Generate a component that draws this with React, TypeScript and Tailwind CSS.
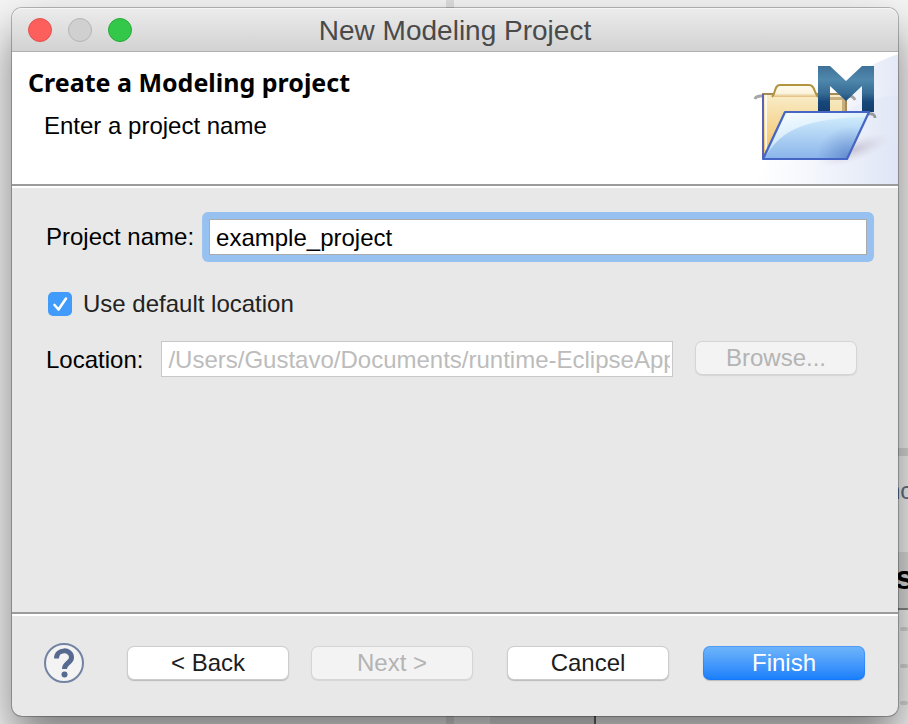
import type { ButtonHTMLAttributes } from "react";

function DialogButton({
  primary = false,
  ...props
}: ButtonHTMLAttributes<HTMLButtonElement> & { primary?: boolean }) {
  const look = primary
    ? "bg-linear-to-b from-[#6fb5fa] to-[#157efb] text-white shadow-[inset_0_0_0_1px_rgba(20,110,250,0.35),0_1px_1px_rgba(0,0,0,0.2)]"
    : "bg-white text-[#1c1c1c] shadow-[inset_0_0_0_1px_rgba(0,0,0,0.2),0_1px_1px_rgba(0,0,0,0.2)] disabled:bg-[#f3f3f3] disabled:text-[#b4b4b4] disabled:shadow-[inset_0_0_0_1px_rgba(0,0,0,0.12),0_1px_1px_rgba(0,0,0,0.08)]";
  return (
    <button
      type="button"
      className={`h-[34px] w-[162px] shrink-0 rounded-[7px] text-2xl leading-[34px] ${look}`}
      {...props}
    />
  );
}

function Separator() {
  return <div className="h-1 shrink-0 border-t-2 border-[#9b9b9b] bg-white" />;
}

function FolderIcon() {
  return (
    <svg viewBox="0 0 146 132" className="h-[132px] w-[146px]" aria-hidden="true">
      <defs>
        <linearGradient id="sky" gradientUnits="userSpaceOnUse" x1="0" y1="0" x2="146" y2="0">
          <stop offset="0" stopColor="#fff" />
          <stop offset="0.3" stopColor="#f7f9fd" />
          <stop offset="1" stopColor="#dfe5f6" />
        </linearGradient>
        <linearGradient id="haze" gradientUnits="userSpaceOnUse" x1="60" y1="0" x2="146" y2="0">
          <stop offset="0" stopColor="#fff" />
          <stop offset="1" stopColor="#e4e9f7" />
        </linearGradient>
        <linearGradient id="manila" x1="0" y1="0" x2="0" y2="1">
          <stop offset="0" stopColor="#f8edc9" />
          <stop offset="1" stopColor="#f3bd5c" />
        </linearGradient>
        <linearGradient id="tab" x1="0" y1="0" x2="0" y2="1">
          <stop offset="0" stopColor="#fffdf0" />
          <stop offset="0.7" stopColor="#fbf3dc" />
          <stop offset="1" stopColor="#e3bd7b" />
        </linearGradient>
        <linearGradient id="front" x1="0" y1="0" x2="0" y2="1">
          <stop offset="0" stopColor="#d6f1fe" />
          <stop offset="1" stopColor="#8ab4ea" />
        </linearGradient>
        <linearGradient id="shine" x1="0" y1="0" x2="0.6" y2="1">
          <stop offset="0" stopColor="#fafeff" />
          <stop offset="1" stopColor="#c8e4fa" stopOpacity="0.7" />
        </linearGradient>
        <radialGradient id="corner" gradientUnits="userSpaceOnUse" cx="98" cy="108" r="34">
          <stop offset="0" stopColor="#4a72bd" stopOpacity="0.7" />
          <stop offset="1" stopColor="#5b86cc" stopOpacity="0" />
        </radialGradient>
        <linearGradient id="mark" x1="0" y1="0" x2="0" y2="1">
          <stop offset="0" stopColor="#3f7299" />
          <stop offset="0.3" stopColor="#5087ad" />
          <stop offset="0.6" stopColor="#356b94" />
          <stop offset="0.78" stopColor="#17477a" />
          <stop offset="1" stopColor="#123e6e" />
        </linearGradient>
        <radialGradient id="cast">
          <stop offset="0" stopColor="#a89cb4" stopOpacity="0.5" />
          <stop offset="1" stopColor="#c4bccb" stopOpacity="0" />
        </radialGradient>
      </defs>
      <path d="M0 132C50 76 88 21 146 2V132Z" fill="url(#haze)" />
      <path d="M20 132C60 76 95 48 146 43V132Z" fill="url(#sky)" opacity="0.7" />
      <path d="M0 132L30 90H146V132Z" fill="url(#sky)" opacity="0.7" />
      <ellipse cx="102" cy="98" rx="38" ry="11" fill="url(#cast)" transform="rotate(-20 102 98)" />
      <path d="M3 47Q4 44 9 44H93Q101 43 103 48M25 65Q26 62 34 62" fill="none" stroke="#777" strokeOpacity="0.65" strokeWidth="3" />
      <path d="M11 42H90Q94 42 94 47V70L14 106H11Z" fill="url(#manila)" stroke="#a78a57" strokeWidth="2" />
      <path d="M66 45H93V60H90V48H66Z" fill="#a58a5a" opacity="0.6" />
      <path d="M11 42V107" stroke="#5c62b4" strokeWidth="2" />
      <path d="M14 43V98" stroke="#fff" strokeOpacity="0.8" strokeWidth="2" />
      <path d="M20 45C24 41 22 33 28 33H57C63 33 62 41 66 45Z" fill="url(#tab)" />
      <path d="M20 45C24 41 22 33 28 33H57C63 33 62 41 66 45" fill="none" stroke="#b4943f" strokeWidth="2" />
      <path d="M66 14H78L94 29L110 14H122V60H110V34L94 49L78 34V60H66Z" fill="url(#mark)" />
      <path d="M116 62Q123 61 123 66" fill="none" stroke="#777" strokeOpacity="0.7" strokeWidth="3" />
      <path d="M33 60H117L95 107H11Z" fill="url(#front)" />
      <path d="M34 61H115L113 65C71 67 33 70 14 104Z" fill="url(#shine)" />
      <path d="M33 60H117L95 107H11Z" fill="url(#corner)" />
      <path d="M33 60H117L95 107H11Z" fill="none" stroke="#4566c4" strokeWidth="2.2" strokeLinejoin="round" />
    </svg>
  );
}

function HelpIcon() {
  return (
    <svg viewBox="0 0 40 40" className="size-10" aria-hidden="true">
      <circle cx="20" cy="20" r="19" fill="#f3f3f3" stroke="#7383a3" strokeWidth="2" />
      <path d="M12.5 15.5C12.5 5.5 27.5 5.5 27.5 14.5C27.5 20 20.5 19.5 20.5 26" fill="none" stroke="#566a8f" strokeWidth="5" />
      <circle cx="20.5" cy="31.5" r="3" fill="#566a8f" />
    </svg>
  );
}

function Backdrop() {
  return (
    <div aria-hidden="true" className="absolute inset-0 overflow-hidden bg-[#f5f5f5]">
      <div className="absolute inset-y-0 left-[446px] w-2 bg-[#dedede]" />
      <div className="absolute bottom-0 left-[490px] h-10 w-[104px] bg-[#e4e4e4]" />
      <div className="absolute bottom-0 left-[594px] h-10 w-0.5 bg-[#666]" />
      <div className="absolute right-0 top-[448px] h-2 w-5 bg-[#d9d9d9]" />
      <div className="absolute right-0 top-[552px] h-14 w-5 bg-[#dedede]" />
      <div className="absolute right-0 top-[608px] h-0.5 w-5 bg-[#888]" />
      <div className="absolute left-[887px] top-[479px] text-2xl leading-6 text-[#66707c]">nc</div>
      <div className="absolute left-[895px] top-[561px] text-[34px] font-bold leading-8 text-black">s</div>
      <div className="absolute right-0 top-[627px] w-2 border-t-4 border-dotted border-[#d6d6d6]" />
      <div className="absolute right-0 top-[664px] w-2 border-t-4 border-dotted border-[#d6d6d6]" />
      <div className="absolute right-0 top-[701px] w-2 border-t-4 border-dotted border-[#d6d6d6]" />
    </div>
  );
}

export default function App() {
  return (
    <div className="relative isolate flex min-h-screen overflow-hidden pb-2 pl-3 pr-[10px] pt-2 font-['Liberation_Sans',Arial,sans-serif] text-2xl leading-7 text-black">
      <Backdrop />
      <main className="relative flex flex-1 flex-col rounded-[10px] bg-[#e8e8e8] shadow-[0_0_0_1px_rgba(0,0,0,0.25),0_24px_46px_rgba(0,0,0,0.5)]">
        <div className="grid h-11 shrink-0 grid-cols-[1fr_auto_1fr] items-center rounded-t-[10px] border-b border-[#b0b0b0] bg-linear-to-b from-[#ececec] to-[#d2d2d2] px-4 shadow-[inset_0_1px_0_#f6f6f6]">
          <div className="flex gap-4">
            <button type="button" aria-label="Close" className="size-6 rounded-full border border-[#e2524e] bg-[#fd605c]" />
            <button type="button" aria-label="Minimize" disabled className="size-6 rounded-full border border-[#b4b4b4] bg-[#d0d0d0]" />
            <button type="button" aria-label="Zoom" className="size-6 rounded-full border border-[#27ab39] bg-[#34c84a]" />
          </div>
          <h1 className="pt-0.5 text-[28px] leading-8 text-[#4a4a4a]">New Modeling Project</h1>
        </div>

        <header className="flex h-[132px] shrink-0 justify-between bg-white pl-4">
          <div className="pt-3.5">
            <h2 className="font-['Noto_Sans',sans-serif] text-[25px] font-bold leading-8">Create a Modeling project</h2>
            <p className="pl-4 pt-3.5">Enter a project name</p>
          </div>
          <FolderIcon />
        </header>
        <Separator />

        <form className="flex flex-1 flex-col pl-[34px] pr-[31px] pt-[31px]">
          <div className="flex items-center gap-[15px]">
            <label htmlFor="project-name">Project name:</label>
            <input
              id="project-name"
              type="text"
              defaultValue="example_project"
              className="h-9 min-w-0 flex-1 border border-[#ababab] bg-white px-1.5 pt-0.5 shadow-[0_0_0_7px_#96c1f0] outline-none [clip-path:inset(-7px_round_6px)]"
            />
          </div>
          <div className="mt-[35px] flex items-center gap-[11px] pl-0.5">
            <span className="grid size-6">
              <input
                id="default-location"
                type="checkbox"
                defaultChecked
                className="peer col-start-1 row-start-1 size-6 appearance-none rounded-[5px] bg-white checked:bg-[#409bfa]"
              />
              <svg viewBox="0 0 24 24" className="pointer-events-none col-start-1 row-start-1 hidden size-6 peer-checked:block" aria-hidden="true">
                <path d="M6.5 13L10.5 17.5L18 6.5" fill="none" stroke="#fff" strokeWidth="2.6" strokeLinecap="round" strokeLinejoin="round" />
              </svg>
            </span>
            <label htmlFor="default-location" className="text-[#222]">Use default location</label>
          </div>
          <div className="mt-[23px] flex items-start pr-[10px]">
            <label htmlFor="location" className="leading-[38px]">Location:</label>
            <input
              id="location"
              type="text"
              disabled
              defaultValue="/Users/Gustavo/Documents/runtime-EclipseApp"
              className="ml-[18px] mr-[22px] h-9 min-w-0 flex-1 border border-[#c8c8c8] bg-white pl-1.5 pr-0.5 pt-0.5 text-[#bcbcbc]"
            />
            <DialogButton disabled>Browse...</DialogButton>
          </div>
        </form>

        <Separator />
        <footer className="flex h-[100px] shrink-0 items-center justify-between pb-1.5 pl-8 pr-[33px]">
          <div className="flex items-center gap-[22px]">
            <button type="button" aria-label="Help" className="mr-[21px] size-10">
              <HelpIcon />
            </button>
            <DialogButton>&lt; Back</DialogButton>
            <DialogButton disabled>Next &gt;</DialogButton>
          </div>
          <div className="flex items-center gap-[34px]">
            <DialogButton>Cancel</DialogButton>
            <DialogButton primary>Finish</DialogButton>
          </div>
        </footer>
      </main>
    </div>
  );
}
